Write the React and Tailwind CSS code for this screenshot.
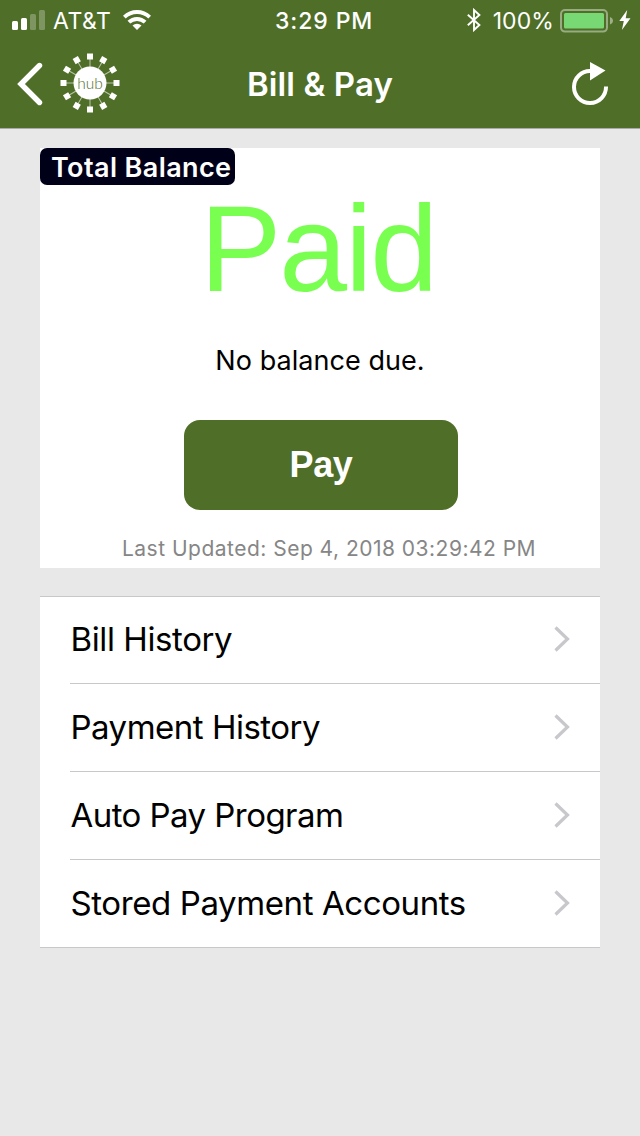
import React from "react";

const MENU_ITEMS = [
  { label: "Bill History", className: "tracking-[-0.4px]" },
  { label: "Payment History", className: "pt-[2px] tracking-[-0.5px]" },
  { label: "Auto Pay Program", className: "pt-[2px] tracking-[-0.55px]" },
  { label: "Stored Payment Accounts", className: "pt-[2px] tracking-[-0.4px]" },
];

const SPOKES = [0, 30, 60, 90, 120, 150, 180, 210, 240, 270, 300, 330];

const SignalIcon = () => (
  <svg className="w-[34px] h-[22px]" viewBox="0 0 34 22" fill="#fff">
    <rect x="0" y="12" width="6" height="9" rx="1.5" />
    <rect x="9" y="9" width="6" height="12" rx="1.5" />
    <rect x="18" y="5" width="6" height="16" rx="1.5" opacity="0.27" />
    <rect x="27" y="1" width="6" height="20" rx="1.5" opacity="0.27" />
  </svg>
);

const WifiIcon = () => (
  <svg className="w-[28px] h-[20px]" viewBox="0 0 28 20" fill="none" stroke="#fff" strokeWidth="3.9">
    <path d="M1.3 7.2a18.2 18.2 0 0 1 25.4 0" />
    <path d="M5.900 12.200a11.7 11.7 0 0 1 16.2 0" />
    <path d="M14 20l-4.5-4.4a6.400 6.400 0 0 1 9 0z" fill="#fff" stroke="none" />
  </svg>
);

const BluetoothIcon = () => (
  <svg className="w-[14px] h-[24px]" viewBox="0 0 14 24" fill="none" stroke="#fff" strokeWidth="1.9">
    <path d="M0.8 6.8L12.4 17 7 22V2l5.4 5L0.8 17.2" />
  </svg>
);

const BatteryIcon = () => (
  <svg className="w-[54px] h-[24px]" viewBox="0 0 54 24">
    <rect x="1" y="1" width="46" height="21.6" rx="4" fill="none" stroke="#fff" strokeOpacity="0.42" strokeWidth="2" />
    <rect x="4" y="4" width="40" height="15.4" rx="1.5" fill="#78d873" />
    <path d="M50 8c4 1.5 4 6 0 7.5z" fill="#fff" fillOpacity="0.45" />
  </svg>
);

const BoltIcon = () => (
  <svg className="w-[12px] h-[20px]" viewBox="0 0 12 20" fill="#fff">
    <path d="M8.2 0L0.3 11h4.5L2.9 20 11.5 8.2H6.7z" />
  </svg>
);

const BackIcon = () => (
  <svg className="w-[26px] h-[44px]" viewBox="0 0 26 44" fill="none" stroke="#fff" strokeWidth="5.4" strokeLinecap="round">
    <path d="M22.5 3.5L4 22l18.5 18.5" />
  </svg>
);

const HubLogo = () => (
  <svg className="mb-[2px] w-[60px] h-[60px]" viewBox="-30 -30 60 60">
    {SPOKES.map((deg) => (
      <g key={deg} transform={`rotate(${deg})`}>
        <path d="M0-15V-24" stroke="#fff" strokeWidth="1" opacity="0.6" />
        <rect x="-3" y="-29.5" width="6" height="6" fill="#fff" />
      </g>
    ))}
    <circle r="16.5" fill="#fff" />
    <text x="0" y="5.5" textAnchor="middle" fill="#4f6e28" className="font-['Lato'] text-[15.5px] font-light">
      hub
    </text>
  </svg>
);

const ReloadIcon = () => (
  <svg className="mt-[2px] w-[38px] h-[46px]" viewBox="0 0 38 46">
    <path d="M18.5 9A16 16 0 1 0 34 24.500" fill="none" stroke="#fff" strokeWidth="4" />
    <path d="M18 0v18.5l15.5-10z" fill="#fff" />
  </svg>
);

const ChevronIcon = () => (
  <svg className="w-[16px] h-[26px]" viewBox="0 0 16 26" fill="none" stroke="#c7c7cc" strokeWidth="3.2">
    <path d="M1.5 1.5L13.5 13 1.5 24.5" />
  </svg>
);

const StatusBar = () => (
  <div className="flex h-10 items-center text-[23px] leading-none">
    <div className="flex w-[275px] items-center pl-3">
      <SignalIcon />
      <span className="ml-[7px] mt-[2px] tracking-[0.5px]">AT&amp;T</span>
      <div className="ml-3">
        <WifiIcon />
      </div>
    </div>
    <span className="mt-[2px] font-medium tracking-[0.9px]">3:29 PM</span>
    <div className="flex flex-1 items-center justify-end pr-[9px]">
      <BluetoothIcon />
      <span className="ml-3 mr-[6px] mt-[2px] tracking-[0.1px]">100%</span>
      <div className="mt-[1px]">
        <BatteryIcon />
      </div>
      <div className="ml-[5px]">
        <BoltIcon />
      </div>
    </div>
  </div>
);

const NavBar = () => (
  <div className="flex h-[88px] items-center justify-between pl-[17px] pr-[30px]">
    <div className="flex w-[150px] items-center gap-[17px]">
      <BackIcon />
      <HubLogo />
    </div>
    <h1 className="text-[33px] font-semibold leading-none tracking-[0.1px]">Bill &amp; Pay</h1>
    <div className="flex w-[137px] justify-end">
      <ReloadIcon />
    </div>
  </div>
);

const App = () => {
  return (
    <div className="h-[1136px] w-[640px] bg-[#e8e8e8] font-['Inter',sans-serif] text-black">
      {/* Header */}
      <header className="h-[129px] border-b border-[#a9aaa9] bg-[#4f6e28] text-white">
        <StatusBar />
        <NavBar />
      </header>

      {/* Balance card */}
      <section className="mx-10 mt-[19px] flex h-[420px] flex-col items-center bg-white">
        <div className="flex h-[37px] w-[195px] items-center self-start rounded-[7px] bg-[#010019] pl-[11px] pt-[2px] text-white">
          <span className="whitespace-nowrap text-[27px] font-semibold leading-none tracking-[0.4px]">Total Balance</span>
        </div>
        <p className="mr-1 mt-[2px] h-[124px] font-['Liberation_Sans',sans-serif] text-[122px] leading-[124px] tracking-[-2px] text-[#78ff50]">
          Paid
        </p>
        <p className="mt-[34px] h-8 text-[27px] leading-8 tracking-[0.05px]">No balance due.</p>
        <button className="ml-[2px] mt-[43px] h-[90px] w-[274px] rounded-2xl bg-[#4f6e28] font-['Liberation_Sans',sans-serif] text-[36px] font-bold leading-none tracking-[-0.3px] text-white">
          Pay
        </button>
        <p className="ml-[18px] mt-[27px] whitespace-nowrap text-[21px] leading-6 tracking-[0.49px] text-[#868686]">
          Last Updated: Sep 4, 2018 03:29:42 PM
        </p>
      </section>

      {/* Menu */}
      <ul className="mx-10 mt-7 border-b border-t border-[#c8c7cc] bg-white pl-[30px]">
        {MENU_ITEMS.map((item) => (
          <li
            key={item.label}
            className="flex h-[88px] items-center justify-between border-b border-[#c8c7cc] pb-[2px] pr-[30px] first:h-[87px] last:h-[87px] last:border-b-0"
          >
            <span className={`ml-[0.5px] whitespace-nowrap text-[33px] leading-none ${item.className}`}>{item.label}</span>
            <ChevronIcon />
          </li>
        ))}
      </ul>
    </div>
  );
};

export default App;
